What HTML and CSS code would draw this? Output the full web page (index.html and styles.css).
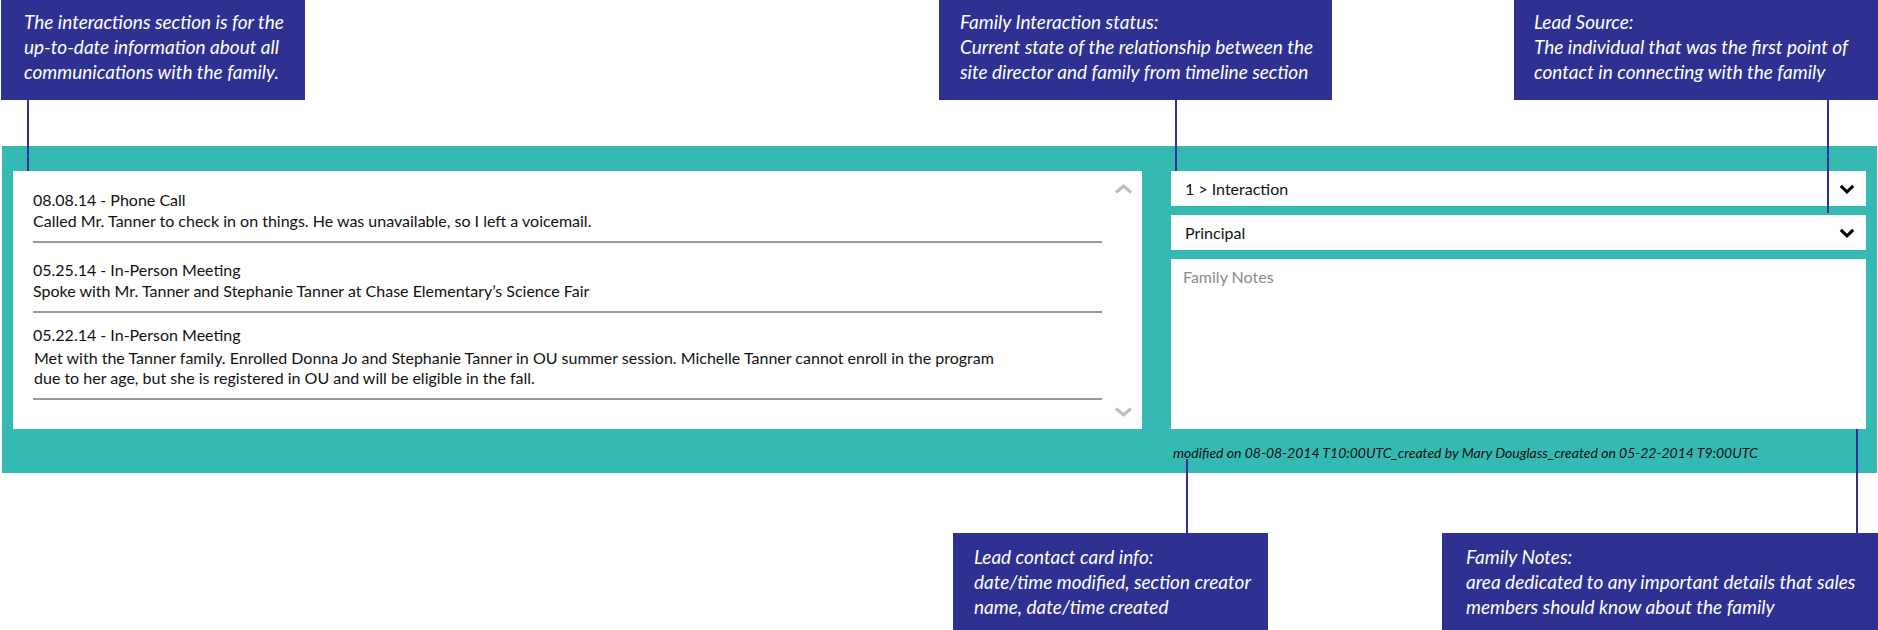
FILE: index.html
```html
<!DOCTYPE html>
<html lang="en">
<head>
<meta charset="utf-8">
<title>Family interactions</title>
<link rel="stylesheet" href="styles.css">
</head>
<body>
<div class="page">
  <div class="callouts callouts-top">
    <div class="note note-interactions">
      <p>The interactions section is for the<br>up-to-date information about all<br>communications with the family.</p>
    </div>
    <div class="note note-status">
      <p>Family Interaction status:<br>Current state of the relationship between the<br>site director and family from timeline section</p>
    </div>
    <div class="note note-source">
      <p>Lead Source:<br>The individual that was the first point of<br>contact in connecting with the family</p>
    </div>
  </div>

  <section class="card">
    <div class="timeline">
      <div class="item item-first">
        <div class="item-title">08.08.14 - Phone Call</div>
        <div class="item-body">Called Mr. Tanner to check in on things. He was unavailable, so I left a voicemail.</div>
      </div>
      <div class="item item-tight">
        <div class="item-title">05.25.14 - In-Person Meeting</div>
        <div class="item-body">Spoke with Mr. Tanner and Stephanie Tanner at Chase Elementary’s Science Fair</div>
      </div>
      <div class="item">
        <div class="item-title">05.22.14 - In-Person Meeting</div>
        <div class="item-body item-body-indent">Met with the Tanner family. Enrolled Donna Jo and Stephanie Tanner in OU summer session. Michelle Tanner cannot enroll in the program<br>due to her age, but she is registered in OU and will be eligible in the fall.</div>
      </div>
      <svg class="scroll scroll-up" width="19" height="10" viewBox="0 0 19 10"><polyline points="2,8.5 9.5,2 17,8.5" fill="none" stroke="#bdbdbd" stroke-width="3"/></svg>
      <svg class="scroll scroll-down" width="19" height="10" viewBox="0 0 19 10"><polyline points="2,1.5 9.5,8 17,1.5" fill="none" stroke="#bdbdbd" stroke-width="3"/></svg>
    </div>

    <div class="side">
      <div class="select">
        <span>1 &gt; Interaction</span>
        <svg class="caret" width="16" height="10" viewBox="0 0 16 10"><polyline points="1.8,1.8 8,7.8 14.2,1.8" fill="none" stroke="#000" stroke-width="3"/></svg>
      </div>
      <div class="select">
        <span>Principal</span>
        <svg class="caret" width="16" height="10" viewBox="0 0 16 10"><polyline points="1.8,1.8 8,7.8 14.2,1.8" fill="none" stroke="#000" stroke-width="3"/></svg>
      </div>
      <div class="notes">Family Notes</div>
    </div>

    <div class="meta">modified on 08-08-2014 T10:00UTC_created by Mary Douglass_created on 05-22-2014 T9:00UTC</div>
  </section>

  <div class="callouts callouts-bottom">
    <div class="note note-card">
      <p>Lead contact card info:<br>date/time modified, section creator<br>name, date/time created</p>
    </div>
    <div class="note note-family">
      <p>Family Notes:<br>area dedicated to any important details that sales<br>members should know about the family</p>
    </div>
  </div>

  <span class="leader leader-1"></span>
  <span class="leader leader-2"></span>
  <span class="leader leader-3"></span>
  <span class="leader leader-4"></span>
  <span class="leader leader-5"></span>
</div>
</body>
</html>
```

FILE: styles.css
```css
* { box-sizing: border-box; }

html, body {
  margin: 0;
  padding: 0;
  background: #ffffff;
}

body {
  font-family: Lato, "Noto Sans", "Liberation Sans", sans-serif;
  color: #111111;
}

.page {
  position: relative;
  width: 1878px;
  height: 630px;
  overflow: hidden;
}

/* ---------- callout notes ---------- */
.callouts {
  display: flex;
  align-items: flex-start;
}

.callouts-top {
  height: 146px;
}

.callouts-bottom {
  margin-top: 60px;
}

.note {
  background: #2f3192;
  color: #ffffff;
  height: 100px;
  font-style: italic;
  font-size: 19px;
  line-height: 24.8px;
  padding: 10px 0 0 21px;
}

.note p { margin: 0; }

.note-interactions { margin-left: 1px; width: 304px; padding-left: 23px; }
.note-status { margin-left: 634px; width: 393px; }
.note-source { margin-left: 182px; width: 364px; padding-left: 20px; }

.callouts-bottom .note { padding-top: 12px; }
.note-card { margin-left: 953px; width: 315px; }
.note-family { margin-left: 174px; width: 436px; padding-left: 24px; }

/* ---------- teal card ---------- */
.card {
  margin-left: 2px;
  width: 1875px;
  height: 327px;
  padding: 25px 11px 10px 11px;
  background: #34bab2;
  display: grid;
  grid-template-columns: 1129px 695px;
  grid-template-rows: 258px 20px;
  column-gap: 29px;
  row-gap: 14px;
}

.timeline {
  position: relative;
  background: #ffffff;
  padding: 19px 40px 0 20px;
  font-size: 16px;
  line-height: 20px;
}

.item {
  border-bottom: 2px solid #999999;
  padding-bottom: 10px;
  margin-bottom: 16px;
}

.item-first { margin-bottom: 17px; }
.item-tight { margin-bottom: 12px; }

.item-body { margin-top: 1px; }
.item-body-indent { padding-left: 1px; margin-top: 3px; }

.scroll {
  position: absolute;
  right: 9px;
  display: block;
}

.scroll-up { top: 13px; }
.scroll-down { bottom: 12px; }

.side {
  display: flex;
  flex-direction: column;
  gap: 9px;
}

.select {
  height: 35px;
  background: #ffffff;
  display: flex;
  align-items: center;
  justify-content: space-between;
  padding: 0 11px 0 14px;
  font-size: 16px;
}

.caret { display: block; margin-top: 1px; }

.notes {
  flex: 1;
  background: #ffffff;
  padding: 8px 12px;
  font-size: 16px;
  line-height: 20px;
  color: #8a8a8a;
}

.meta {
  grid-column: 2;
  padding-left: 2px;
  font-size: 14px;
  line-height: 20px;
  font-style: italic;
  color: #111111;
  white-space: nowrap;
}

/* ---------- leader lines ---------- */
.leader {
  position: absolute;
  width: 2px;
  background: #2f3192;
}

.leader-1 { left: 27px; top: 100px; height: 71px; }
.leader-2 { left: 1175px; top: 100px; height: 71px; }
.leader-3 { left: 1827px; top: 100px; height: 113px; }
.leader-4 { left: 1186px; top: 459px; height: 74px; }
.leader-5 { left: 1856px; top: 429px; height: 104px; }
```
